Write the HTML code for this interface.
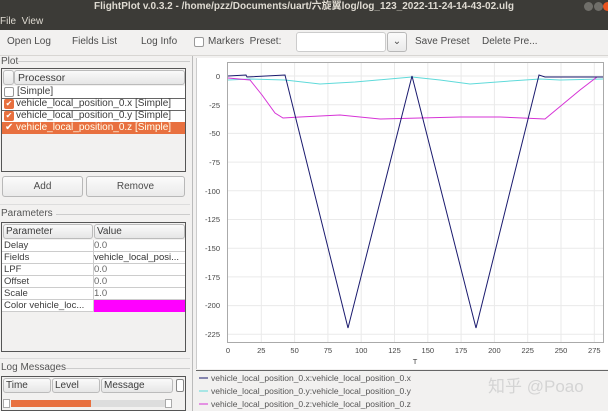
<!DOCTYPE html>
<html><head><meta charset="utf-8"><style>
*{margin:0;padding:0;box-sizing:border-box}
body{width:608px;height:411px;overflow:hidden;background:#f2f1f0;font-family:"Liberation Sans","Noto Sans CJK SC",sans-serif;font-size:10px;color:#3c3c3c;position:relative}
.a{position:absolute;white-space:nowrap}
.title{left:0;top:0;width:608px;height:14px;background:#3c3b37;color:#dfdbd2;font-weight:bold;font-size:10px;text-align:center;line-height:14px}
.menu{left:0;top:14px;width:608px;height:16px;background:#3c3b37;color:#dfdbd2;line-height:15px;padding-left:0}
.tb{top:30px;height:25px;line-height:24px;color:#4c4c4c}
.box{border:1px solid #555;background:#fff}
.hdr{background:linear-gradient(#fafafa,#e6e6e6);border:1px solid #bbb;border-radius:3px}
.btn{background:linear-gradient(#fbfbfb,#eaeaea);border:1px solid #b8b8b8;border-radius:3px;text-align:center;line-height:19px;color:#4c4c4c}
.cb{width:10px;height:10px;border:1px solid #999;border-radius:2px;background:#fff}
.cbo{width:10px;height:10px;border-radius:2px;background:#e8703f;color:#fff;font-size:8px;line-height:10px;text-align:center}
.row{height:12px;line-height:11px;border-bottom:1px solid #ccc}
</style></head><body>
<div class="a title">FlightPlot v.0.3.2 - /home/pzz/Documents/uart/六旋翼log/log_123_2022-11-24-14-43-02.ulg</div>
<div class="a" style="left:584px;top:2px;width:9px;height:9px;border-radius:50%;background:#6f6e69"></div>
<div class="a" style="left:594px;top:2px;width:9px;height:9px;border-radius:50%;background:#6f6e69"></div>
<div class="a" style="left:603px;top:2px;width:9px;height:9px;border-radius:50%;background:#e95420"></div>
<div class="a menu">File&nbsp; View</div>
<div class="a tb" style="left:7px">Open Log</div>
<div class="a tb" style="left:72px">Fields List</div>
<div class="a tb" style="left:141px">Log Info</div>
<div class="a cb" style="left:194px;top:37px"></div>
<div class="a tb" style="left:208px">Markers&nbsp; Preset:</div>
<div class="a" style="left:296px;top:32px;width:90px;height:20px;background:#fff;border:1px solid #ccc;border-radius:3px"></div>
<div class="a btn" style="left:387px;top:32px;width:20px;height:20px;font-size:10px;line-height:18px">⌄</div>
<div class="a tb" style="left:415px">Save Preset</div>
<div class="a tb" style="left:482px">Delete Pre...</div>
<div class="a" style="left:0;top:55px;width:608px;height:1px;background:#d8d6d3"></div>

<div class="a" style="left:1px;top:56px;color:#555">Plot</div>
<div class="a" style="left:18px;top:61px;width:172px;height:1px;background:#ccc"></div>
<div class="a box" style="left:1px;top:68px;width:185px;height:104px;background:#f2f1f0">
 <div class="a hdr" style="left:1px;top:1px;width:11px;height:15px"></div>
 <div class="a hdr" style="left:12px;top:1px;width:171px;height:15px;padding-left:3px;line-height:14px;font-size:10.5px">Processor</div>
 <div class="a" style="left:0;top:17px;width:183px;height:48px;background:#fff"></div>
 <div class="a cb" style="left:2px;top:18px"></div><div class="a" style="left:15px;top:17px;line-height:12px">[Simple]</div>
 <div class="a" style="left:0;top:29px;width:183px;height:1px;background:#666"></div>
 <div class="a cbo" style="left:2px;top:30px">✔</div><div class="a" style="left:14px;top:29px;line-height:12px">vehicle_local_position_0.x [Simple]</div>
 <div class="a" style="left:0;top:41px;width:183px;height:1px;background:#666"></div>
 <div class="a cbo" style="left:2px;top:42px">✔</div><div class="a" style="left:14px;top:41px;line-height:12px">vehicle_local_position_0.y [Simple]</div>
 <div class="a" style="left:0;top:53px;width:183px;height:12px;background:#e8703f"></div>
 <div class="a" style="left:3px;top:53px;color:#fff;line-height:12px">✔</div><div class="a" style="left:14px;top:53px;line-height:12px;color:#ffe">vehicle_local_position_0.z [Simple]</div>
</div>
<div class="a btn" style="left:2px;top:176px;width:81px;height:21px">Add</div>
<div class="a btn" style="left:86px;top:176px;width:99px;height:21px">Remove</div>
<div class="a" style="left:0;top:204px;width:190px;height:1px;background:#ddd"></div>
<div class="a" style="left:1px;top:208px;color:#555">Parameters</div>
<div class="a" style="left:56px;top:214px;width:134px;height:1px;background:#ccc"></div>
<div class="a box" style="left:1px;top:222px;width:185px;height:130px;background:#f2f1f0">
 <div class="a hdr" style="left:1px;top:1px;width:90px;height:15px;padding-left:2px;line-height:14px">Parameter</div>
 <div class="a hdr" style="left:92px;top:1px;width:91px;height:15px;padding-left:2px;line-height:14px">Value</div>
 <div class="a" style="left:0;top:17px;width:183px;font-size:9.5px">
  <div class="row" style="background:#fff"><span style="padding-left:2px">Delay</span><span class="a" style="left:92px;color:#666">0.0</span></div>
  <div class="row" style="background:#fff"><span style="padding-left:2px">Fields</span><span class="a" style="left:92px;color:#333">vehicle_local_posi...</span></div>
  <div class="row" style="background:#fff"><span style="padding-left:2px">LPF</span><span class="a" style="left:92px;color:#666">0.0</span></div>
  <div class="row" style="background:#fff"><span style="padding-left:2px">Offset</span><span class="a" style="left:92px;color:#666">0.0</span></div>
  <div class="row" style="background:#fff"><span style="padding-left:2px">Scale</span><span class="a" style="left:92px;color:#666">1.0</span></div>
  <div class="row" style="background:#fff;position:relative"><span style="padding-left:2px">Color vehicle_loc...</span><span class="a" style="left:92px;top:0;width:91px;height:12px;background:#ff00ff"></span></div>
 </div>
 <div class="a" style="left:91px;top:17px;width:1px;height:72px;background:#ccc"></div>
</div>
<div class="a" style="left:0;top:358px;width:190px;height:1px;background:#ddd"></div>
<div class="a" style="left:1px;top:362px;color:#555">Log Messages</div>
<div class="a" style="left:66px;top:368px;width:124px;height:1px;background:#ccc"></div>
<div class="a box" style="left:1px;top:376px;width:185px;height:35px;background:#f2f1f0">
 <div class="a hdr" style="left:1px;top:1px;width:48px;height:15px;padding-left:2px;line-height:14px">Time</div>
 <div class="a hdr" style="left:50px;top:1px;width:48px;height:15px;padding-left:2px;line-height:14px">Level</div>
 <div class="a hdr" style="left:99px;top:1px;width:72px;height:15px;padding-left:2px;line-height:14px">Message</div>
 <div class="a" style="left:174px;top:2px;width:8px;height:13px;border:1px solid #888;border-radius:2px;background:#fff"></div>
 <div class="a" style="left:1px;top:22px;width:7px;height:9px;border:1px solid #aaa;background:#fff"></div>
 <div class="a" style="left:9px;top:23px;width:80px;height:7px;background:#e8703f"></div>
 <div class="a" style="left:89px;top:23px;width:80px;height:7px;background:#ddd"></div>
 <div class="a" style="left:163px;top:22px;width:7px;height:9px;border:1px solid #aaa;background:#fff"></div>
</div>
<div class="a" style="left:192px;top:56px;width:1px;height:355px;background:#bbb"></div>

<div class="a" style="left:196px;top:58px;width:412px;height:311px;background:#fff;border-left:1px solid #ccc"></div>
<svg class="a" style="left:0;top:0" width="608" height="411" font-family="Liberation Sans, sans-serif" font-size="7.5" fill="#444">
<g stroke="#eaeaea" stroke-width="1">
<line x1="261.3" y1="62" x2="261.3" y2="342"/><line x1="294.6" y1="62" x2="294.6" y2="342"/><line x1="327.9" y1="62" x2="327.9" y2="342"/><line x1="361.2" y1="62" x2="361.2" y2="342"/><line x1="394.5" y1="62" x2="394.5" y2="342"/><line x1="427.8" y1="62" x2="427.8" y2="342"/><line x1="461.1" y1="62" x2="461.1" y2="342"/><line x1="494.4" y1="62" x2="494.4" y2="342"/><line x1="527.7" y1="62" x2="527.7" y2="342"/><line x1="561" y1="62" x2="561" y2="342"/><line x1="594.3" y1="62" x2="594.3" y2="342"/>
<line x1="227" y1="76" x2="603" y2="76"/><line x1="227" y1="104.7" x2="603" y2="104.7"/><line x1="227" y1="133.4" x2="603" y2="133.4"/><line x1="227" y1="162.1" x2="603" y2="162.1"/><line x1="227" y1="190.8" x2="603" y2="190.8"/><line x1="227" y1="219.5" x2="603" y2="219.5"/><line x1="227" y1="248.2" x2="603" y2="248.2"/><line x1="227" y1="276.9" x2="603" y2="276.9"/><line x1="227" y1="305.6" x2="603" y2="305.6"/><line x1="227" y1="334.3" x2="603" y2="334.3"/>
</g>
<rect x="227.5" y="62.5" width="376" height="280" fill="none" stroke="#aaa"/>
<g text-anchor="end">
<text x="220" y="79">0</text><text x="220" y="108">-25</text><text x="220" y="136">-50</text><text x="220" y="165">-75</text><text x="220" y="194">-100</text><text x="220" y="222">-125</text><text x="220" y="251">-150</text><text x="220" y="280">-175</text><text x="220" y="308">-200</text><text x="220" y="337">-225</text>
</g>
<g text-anchor="middle">
<text x="228" y="353">0</text><text x="261.3" y="353">25</text><text x="294.6" y="353">50</text><text x="327.9" y="353">75</text><text x="361.2" y="353">100</text><text x="394.5" y="353">125</text><text x="427.8" y="353">150</text><text x="461.1" y="353">175</text><text x="494.4" y="353">200</text><text x="527.7" y="353">225</text><text x="561" y="353">250</text><text x="594.3" y="353">275</text>
<text x="415" y="364">T</text>
</g>
<polyline fill="none" stroke="#5fdada" stroke-width="1" points="228,80 250,79 285,80 320,84 355,82 412,77 440,80 470,84 510,81 540,79 560,80 603,79"/>
<polyline fill="none" stroke="#d633d6" stroke-width="1" points="228,78 250,80 262,95 275,113 283,118 300,117 340,115 380,119 420,118 460,117 500,117 545,119 580,90 597,77 603,77"/>
<polyline fill="none" stroke="#1a1a6e" stroke-width="1" points="228,76 246,75 247,77 285,75 348,328 412,76 476,328 539,75 545,77 603,77"/>
<line x1="196" y1="370.5" x2="608" y2="370.5" stroke="#666"/>
<g font-size="8.5" fill="#555">
<line x1="199" y1="378" x2="208" y2="378" stroke="#1a1a6e"/><text x="211" y="381">vehicle_local_position_0.x:vehicle_local_position_0.x</text>
<line x1="199" y1="391" x2="208" y2="391" stroke="#5fdada"/><text x="211" y="394">vehicle_local_position_0.y:vehicle_local_position_0.y</text>
<line x1="199" y1="404" x2="208" y2="404" stroke="#d633d6"/><text x="211" y="407">vehicle_local_position_0.z:vehicle_local_position_0.z</text>
</g>
<text x="488" y="392" font-size="17" fill="#d4d4d4" font-family="Liberation Sans, Noto Sans CJK SC, sans-serif">知乎 @Poao</text>
</svg>
</body></html>
